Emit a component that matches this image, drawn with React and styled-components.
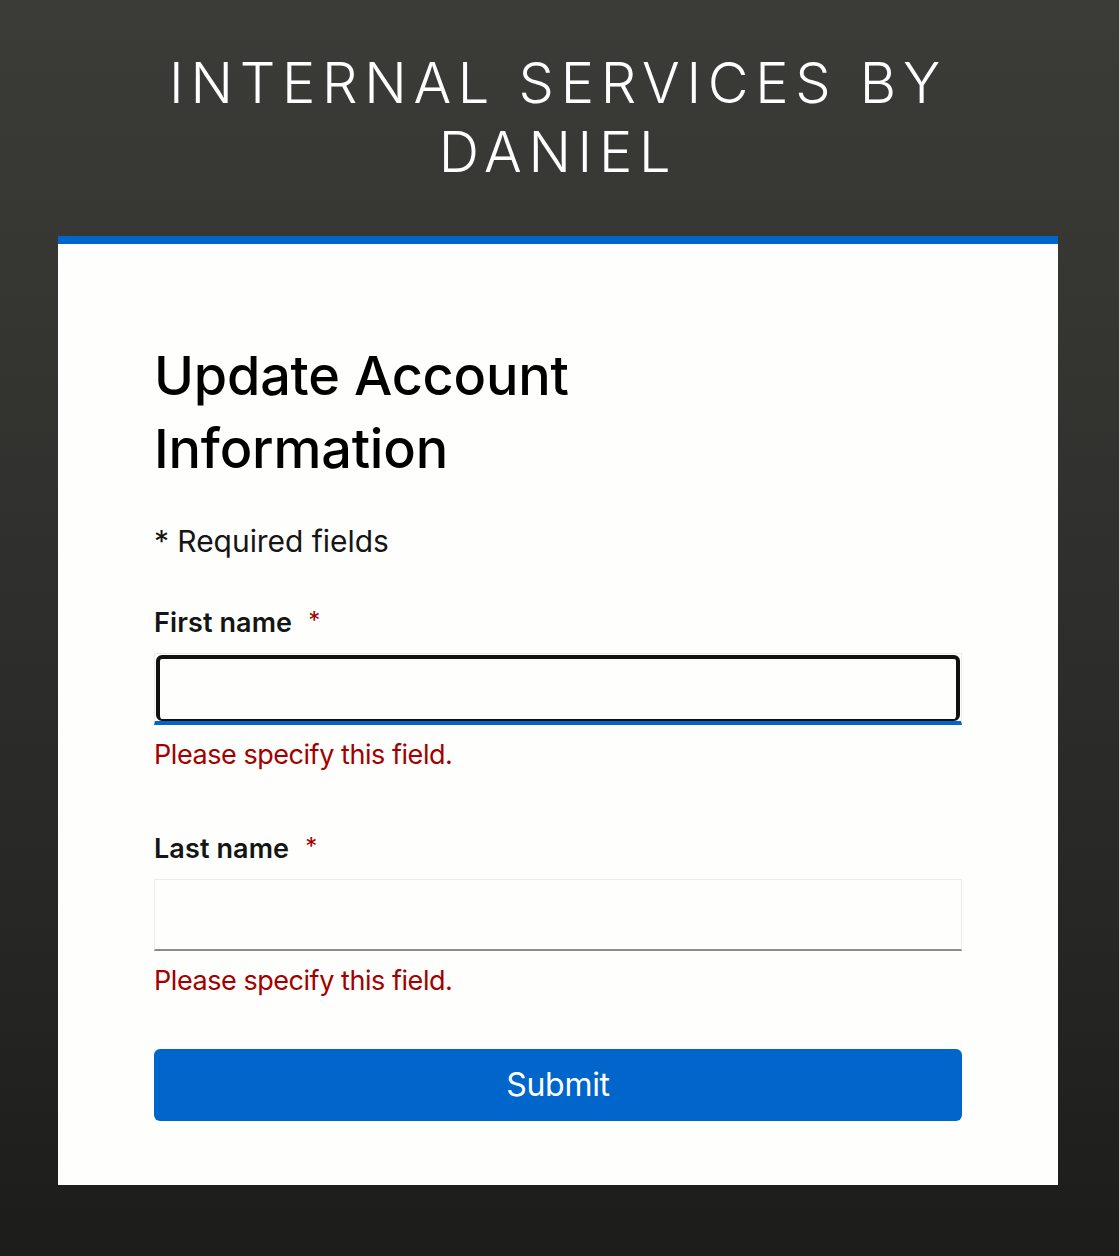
import React from 'react'
import styled, { createGlobalStyle } from 'styled-components'

const GlobalStyle = createGlobalStyle`
  html, body {
    margin: 0;
    padding: 0;
  }
  body {
    font-family: "Inter", "Open Sans", "Liberation Sans", sans-serif;
    background: #1e1f1c;
  }
`

const Page = styled.div`
  min-height: 1256px;
  box-sizing: border-box;
  padding: 0 61px 71px 58px;
  background: linear-gradient(to bottom, #3b3c38 0%, #353632 25%, #2c2d2a 55%, #262724 75%, #1c1d1a 100%);
`

const Header = styled.h1`
  margin: 0;
  padding: 49px 50px 49px;
  font-family: "Inter", "Liberation Sans", sans-serif;
  font-size: 56px;
  font-weight: 300;
  line-height: 69px;
  letter-spacing: 6.7px;
  text-align: center;
  text-transform: uppercase;
  color: #fff;
`

const Card = styled.main`
  box-sizing: border-box;
  width: 1000px;
  border-top: 8px solid #0066cc;
  background: #fefefc;
  padding: 95px 96px 64px;
`

const Title = styled.h2`
  margin: 0 0 34px;
  max-width: 500px;
  font-size: 54px;
  font-weight: 500;
  line-height: 73px;
  letter-spacing: -0.2px;
  color: #000;
`

const Required = styled.p`
  margin: 0 0 38px;
  font-size: 30px;
  line-height: 44px;
  letter-spacing: -0.05px;
  color: #151515;
`

const Field = styled.div`
  margin-bottom: 47px;

  & + & {
    margin-top: 51px;
  }
`

const Label = styled.label`
  display: block;
  margin-bottom: 10px;
  font-size: 27px;
  font-weight: 600;
  line-height: 40px;
  letter-spacing: 0.1px;
  color: #151515;
`

const Star = styled.span`
  margin-left: 16px;
  font-size: 24px;
  font-weight: 400;
  vertical-align: 3px;
  color: #a30000;
`

const InputFrame = styled.div`
  box-sizing: border-box;
  height: 72px;
  padding: ${props => (props.$focused ? '1px 1px 0' : '0')};
  border: 1px solid #ebebe9;
  border-bottom: ${props => (props.$focused ? '4px solid #0066cc' : '2px solid #8a8d88')};
`

const Input = styled.input`
  display: block;
  box-sizing: border-box;
  width: 100%;
  height: 100%;
  padding: 0 16px;
  background: transparent;
  border: 0;
  outline: none;

  &:focus {
    border: 4px solid #111210;
    border-bottom-width: 2px;
    border-radius: 6px;
  }
`

const ErrorText = styled.div`
  margin-top: 9px;
  font-size: 27px;
  line-height: 42px;
  letter-spacing: -0.45px;
  color: #a30000;
`

const Submit = styled.button`
  display: block;
  width: 100%;
  height: 72px;
  padding: 0 0 2px;
  border: 0;
  border-radius: 6px;
  background: #0066cc;
  font-family: inherit;
  font-size: 32px;
  letter-spacing: -0.3px;
  color: #fff;
`

export default function App() {
  return (
    <>
      <GlobalStyle />
      <Page>
        <Header>Internal Services by Daniel</Header>
        <Card>
          <Title>Update Account Information</Title>
          <Required>* Required fields</Required>
          <Field>
            <Label>First name<Star>*</Star></Label>
            <InputFrame $focused>
              <Input autoFocus />
            </InputFrame>
            <ErrorText>Please specify this field.</ErrorText>
          </Field>
          <Field>
            <Label>Last name<Star>*</Star></Label>
            <InputFrame>
              <Input />
            </InputFrame>
            <ErrorText>Please specify this field.</ErrorText>
          </Field>
          <Submit>Submit</Submit>
        </Card>
      </Page>
    </>
  )
}
